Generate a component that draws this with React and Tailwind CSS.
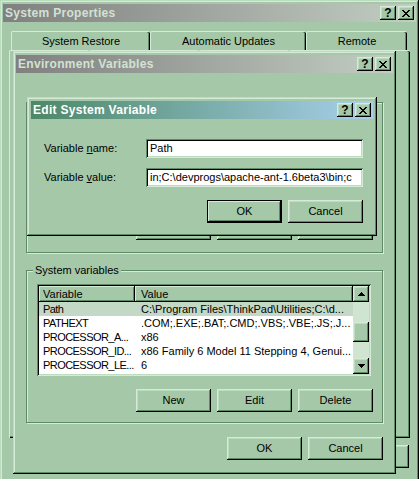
import React from 'react';

// bevel styles (Spruce-like classic theme)
const RAISED = 'shadow-[inset_-1px_-1px_#000,inset_1px_1px_#d6ead8,inset_-2px_-2px_#5f8a66,inset_2px_2px_#bcdcc0]';
const WINDOW = 'shadow-[inset_-1px_-1px_#000,inset_1px_1px_#bcdcc0,inset_-2px_-2px_#5f8a66,inset_2px_2px_#d6ead8]';
const SUNKEN = 'shadow-[inset_1px_1px_#5f8a66,inset_-1px_-1px_#d6ead8,inset_2px_2px_#000,inset_-2px_-2px_#bcdcc0]';
const DEFAULT_BTN = 'shadow-[inset_-1px_-1px_#000,inset_1px_1px_#000,inset_-2px_-2px_#000,inset_2px_2px_#d6ead8,inset_-3px_-3px_#5f8a66]';

const CloseGlyph = () => {
    const rows = ['XX....XX', '.XX..XX.', '..XXXX..', '...XX...', '..XXXX..', '.XX..XX.', 'XX....XX'];
    return (
        <svg width="8" height="7" viewBox="0 0 8 7" shapeRendering="crispEdges">
            {rows.map((r, y) =>
                r.split('').map((c, x) => (c === 'X' ? <rect key={`${x}-${y}`} x={x} y={y} width="1" height="1" fill="#000" /> : null))
            )}
        </svg>
    );
};

const Arrow = ({ down }) => (
    <svg width="7" height="4" viewBox="0 0 7 4" shapeRendering="crispEdges">
        <path d={down ? 'M0 0H7L3.5 4Z' : 'M3.5 0L7 4H0Z'} fill="#000" />
    </svg>
);

const TitleButtons = () => (
    <div className="flex items-center">
        <div className={`w-[16px] h-[14px] bg-[#a5c8a8] ${RAISED} flex items-center justify-center text-[12px] font-bold leading-none text-black`}>?</div>
        <div className={`ml-[2px] w-[16px] h-[14px] bg-[#a5c8a8] ${RAISED} flex items-center justify-center`}>
            <CloseGlyph />
        </div>
    </div>
);

const TitleBar = ({ title, active }) => (
    <div
        className={`h-[18px] flex items-center justify-between pl-[2px] pr-[2px] ${
            active ? 'bg-gradient-to-r from-[#4c8868] to-[#a8d0ec] text-white' : 'bg-gradient-to-r from-[#808080] to-[#c2cec2] text-[#d2e2d2]'
        }`}
    >
        <span className="text-[12px] font-bold tracking-[0.3px] leading-none">{title}</span>
        <TitleButtons />
    </div>
);

const Button = ({ children, isDefault, className = '' }) => (
    <div className={`w-[75px] h-[23px] bg-[#a5c8a8] ${isDefault ? DEFAULT_BTN : RAISED} flex items-center justify-center text-[11px] text-black ${className}`}>
        {children}
    </div>
);

const Tab = ({ label, width }) => (
    <div
        className="h-[19px] flex items-center justify-center text-[11px] text-black rounded-t-[2px] border-t border-l border-[#d6ead8] shadow-[inset_-1px_0_#000,inset_-2px_0_#5f8a66]"
        style={{ width }}
    >
        {label}
    </div>
);

const GroupBox = ({ label, className = '', children }) => (
    <div className={`relative border border-[#5f8a66] shadow-[inset_1px_1px_#d6ead8,1px_1px_#d6ead8] ${className}`}>
        <span className="absolute -top-[8px] left-[6px] px-[2px] bg-[#a5c8a8] text-[11px] leading-[14px] text-black">{label}</span>
        {children}
    </div>
);

const sysVars = [
    ['Path', 'C:\\Program Files\\ThinkPad\\Utilities;C:\\d...'],
    ['PATHEXT', '.COM;.EXE;.BAT;.CMD;.VBS;.VBE;.JS;.J...'],
    ['PROCESSOR_A...', 'x86'],
    ['PROCESSOR_ID...', 'x86 Family 6 Model 11 Stepping 4, Genui...'],
    ['PROCESSOR_LE...', '6'],
];

const ListView = ({ rows, selected }) => (
    <div className={`w-[334px] h-[92px] bg-white ${SUNKEN} p-[2px] flex`}>
        <div className="flex-1 flex flex-col overflow-hidden">
            <div className="h-[16px] flex text-[11px] text-black">
                <div className="w-[96px] bg-[#a5c8a8] shadow-[inset_-1px_-1px_#000,inset_1px_1px_#d6ead8,inset_-2px_-2px_#5f8a66] pl-[4px] leading-[16px]">Variable</div>
                <div className="flex-1 bg-[#a5c8a8] shadow-[inset_-1px_-1px_#000,inset_1px_1px_#d6ead8,inset_-2px_-2px_#5f8a66] pl-[6px] leading-[16px]">Value</div>
            </div>
            {rows.map(([name, value], i) => (
                <div key={name} className={`h-[14px] flex text-[11px] leading-[14px] text-black whitespace-nowrap ${i === selected ? 'bg-[#c4d8c6]' : ''}`}>
                    <div className="w-[96px] pl-[4px] overflow-hidden tracking-[-0.55px]">{name}</div>
                    <div className="flex-1 pl-[6px] overflow-hidden">{value}</div>
                </div>
            ))}
        </div>
        <div className="w-[16px] flex flex-col">
            <div className={`h-[16px] bg-[#a5c8a8] ${RAISED} flex items-center justify-center`}>
                <Arrow />
            </div>
            <div className="flex-1 bg-[#d0e4d2] flex flex-col">
                <div className="h-[20px]" />
                <div className={`h-[20px] bg-[#a5c8a8] ${RAISED}`} />
            </div>
            <div className={`h-[16px] bg-[#a5c8a8] ${RAISED} flex items-center justify-center`}>
                <Arrow down />
            </div>
        </div>
    </div>
);

const EnvironmentVariables = () => (
    <div className={`absolute left-[13px] top-[51px] w-[383px] h-[423px] bg-[#a5c8a8] ${WINDOW} pt-[4px] px-[3px]`}>
        <TitleBar title="Environment Variables" />
        <GroupBox label="User variables for Administrator" className="ml-[10px] mt-[29px] w-[357px] h-[151px]">
            <div className="pl-[10px] pt-[12px]">
                <ListView rows={[['TEMP', '%USERPROFILE%\\Local Settings\\Temp'], ['TMP', '%USERPROFILE%\\Local Settings\\Temp']]} selected={-1} />
            </div>
            <div className="flex justify-end gap-[6px] pr-[9px] mt-[10px]">
                <Button>New</Button>
                <Button>Edit</Button>
                <Button>Delete</Button>
            </div>
        </GroupBox>
        <GroupBox label="System variables" className="ml-[10px] mt-[17px] w-[357px] h-[153px]">
            <div className="pl-[10px] pt-[13px]">
                <ListView rows={sysVars} selected={0} />
            </div>
            <div className="flex justify-end gap-[6px] pr-[9px] mt-[13px]">
                <Button>New</Button>
                <Button>Edit</Button>
                <Button>Delete</Button>
            </div>
        </GroupBox>
        <div className="flex justify-end gap-[6px] pr-[10px] mt-[14px]">
            <Button>OK</Button>
            <Button>Cancel</Button>
        </div>
    </div>
);

const EditSystemVariable = () => (
    <div className={`absolute left-[27px] top-[97px] w-[350px] h-[139px] bg-[#a5c8a8] ${WINDOW} pt-[4px] px-[4px]`}>
        <TitleBar title="Edit System Variable" active />
        <div className="flex items-center mt-[20px] ml-[13px]">
            <div className="w-[102px] text-[11px] text-black">
                Variable <span className="underline">n</span>ame:
            </div>
            <div className={`w-[217px] h-[19px] bg-white ${SUNKEN} px-[4px] text-[11px] leading-[19px] text-black whitespace-nowrap overflow-hidden`}>Path</div>
        </div>
        <div className="flex items-center mt-[10px] ml-[13px]">
            <div className="w-[102px] text-[11px] text-black">
                Variable <span className="underline">v</span>alue:
            </div>
            <div className={`w-[217px] h-[19px] bg-white ${SUNKEN} px-[4px] text-[11px] leading-[19px] text-black whitespace-nowrap overflow-hidden`}>
                in;C:\devprogs\apache-ant-1.6beta3\bin;c
            </div>
        </div>
        <div className="flex justify-end gap-[6px] pr-[10px] mt-[13px]">
            <Button isDefault>OK</Button>
            <Button>Cancel</Button>
        </div>
    </div>
);

const App = () => {
    return (
        <div className="relative w-[419px] h-[479px] overflow-hidden bg-[#a5c8a8] font-['Liberation_Sans',Arial,sans-serif]">
            {/* System Properties (inactive, behind) */}
            <div className={`w-[419px] h-[495px] bg-[#a5c8a8] ${WINDOW} pt-[4px] px-[3px]`}>
                <TitleBar title="System Properties" />
                <div className="flex ml-[8px] mt-[9px]">
                    <Tab label="System Restore" width={139} />
                    <Tab label="Automatic Updates" width={156} />
                    <Tab label="Remote" width={101} />
                </div>
                <div className="flex ml-[6px]">
                    <Tab label="General" width={80} />
                    <Tab label="Computer Name" width={110} />
                    <Tab label="Hardware" width={90} />
                    <Tab label="Advanced" width={121} />
                </div>
                <div className="ml-[6px] w-[401px] h-[369px] border-l border-[#d6ead8] shadow-[inset_-1px_-1px_#000,inset_-2px_-2px_#5f8a66]" />
                <div className="flex justify-end gap-[6px] pr-[7px] mt-[7px]">
                    <Button>OK</Button>
                    <Button>Cancel</Button>
                    <Button>Apply</Button>
                </div>
            </div>
            <EnvironmentVariables />
            <EditSystemVariable />
        </div>
    );
};

export default App;
